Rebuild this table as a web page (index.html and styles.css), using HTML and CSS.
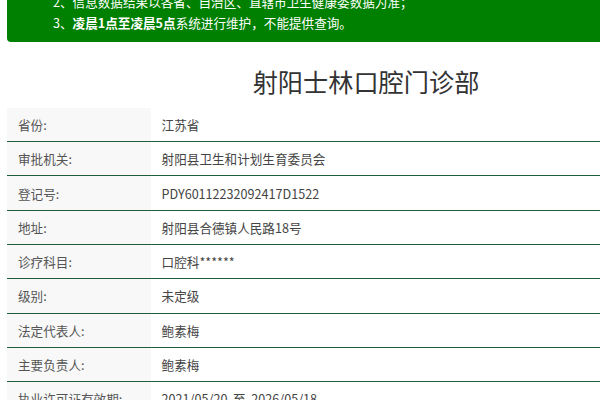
FILE: index.html
```html
<!DOCTYPE html>
<html lang="zh-CN">
<head>
<meta charset="utf-8">
<title>射阳士林口腔门诊部</title>
<link rel="stylesheet" href="styles.css">
</head>
<body>
<div class="page">
  <div class="notice">
    <p class="notice-line">1、本系统提供医疗机构执业登记信息查询服务；</p>
    <p class="notice-line">2、信息数据结果以各省、自治区、直辖市卫生健康委数据为准；</p>
    <p class="notice-line">3、<b>凌晨1点至凌晨5点</b>系统进行维护，不能提供查询。</p>
  </div>
  <h1 class="title">射阳士林口腔门诊部</h1>
  <div class="info">
    <div class="row"><div class="label">省份:</div><div class="value">江苏省</div></div>
    <div class="row"><div class="label">审批机关:</div><div class="value">射阳县卫生和计划生育委员会</div></div>
    <div class="row"><div class="label">登记号:</div><div class="value">PDY60112232092417D1522</div></div>
    <div class="row"><div class="label">地址:</div><div class="value">射阳县合德镇人民路18号</div></div>
    <div class="row"><div class="label">诊疗科目:</div><div class="value">口腔科******</div></div>
    <div class="row"><div class="label">级别:</div><div class="value">未定级</div></div>
    <div class="row"><div class="label">法定代表人:</div><div class="value">鲍素梅</div></div>
    <div class="row"><div class="label">主要负责人:</div><div class="value">鲍素梅</div></div>
    <div class="row"><div class="label">执业许可证有效期:</div><div class="value">2021/05/20&nbsp;&nbsp;至&nbsp;&nbsp;2026/05/18</div></div>
    <div class="row"><div class="label">经营性质:</div><div class="value">营利性</div></div>
  </div>
</div>
</body>
</html>
```
FILE: styles.css
```css
html, body {
  margin: 0;
  padding: 0;
  overflow: hidden;
  background: #fff;
}
body {
  font-family: "Noto Sans CJK SC", "Noto Sans", sans-serif;
  font-size: 12.6px;
  color: #444;
}
.page {
  width: 718px;
  margin-left: 7px;
}
.notice {
  margin-top: -30px;
  background: #008000;
  color: #fff;
  padding: 0 0 8.7px 46px;
  border-radius: 0 0 4px 4px;
}
.notice-line {
  margin: 0;
  line-height: 21px;
}
.notice-line b {
  font-weight: 700;
}
.title {
  margin: 21px 0 7.3px;
  font-size: 25.2px;
  line-height: 37.8px;
  font-weight: 400;
  color: #333;
  text-align: center;
}
.info {
  display: flex;
  flex-direction: column;
}
.row {
  display: grid;
  grid-template-columns: 20% 1fr;
  height: 33.3px;
  border-bottom: 1px solid #1f5d3d;
}
.label {
  background: #f8f8f8;
  color: #555;
  padding-left: 11px;
  display: flex;
  align-items: center;
  white-space: nowrap;
}
.value {
  padding-left: 11px;
  display: flex;
  align-items: center;
  color: #444;
}
```
